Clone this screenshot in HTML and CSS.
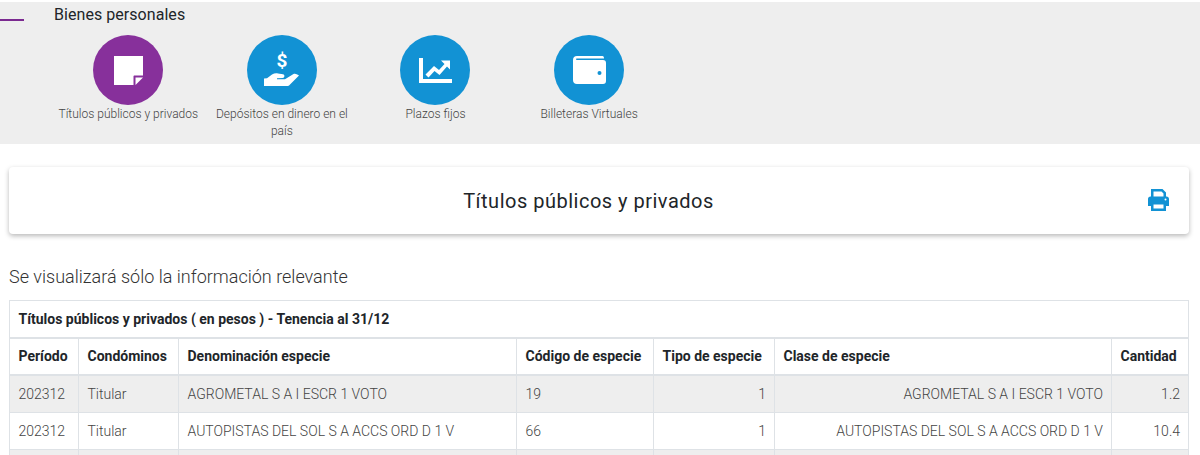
FILE: index.html
```html
<!DOCTYPE html>
<html lang="en">
<head>
  <meta charset="UTF-8" />
  <title>Bienes personales</title>
  <link rel="stylesheet" href="styles.css">
</head>
<body>
  <!-- Selector de bienes -->
  <div class="band">
    <div class="band-head">
      <span class="tick"></span>
      <span class="band-title">Bienes personales</span>
    </div>
    <div class="steps">
      <div class="step">
        <div class="circle purple">
          <svg width="29" height="29" viewBox="0 0 29 29"><path d="M0 0H29V19.500H20.500C19.900 19.500 19.500 19.900 19.500 20.500V29H0Z" fill="#fff"/><path d="M21.500 21.500H29L21.500 29Z" fill="#fff"/></svg>
        </div>
        <span class="step-label">Títulos públicos y privados</span>
      </div>
      <div class="step">
        <div class="circle stack">
          <span class="dollar">$</span>
          <svg width="35" height="13" viewBox="0 0 35 13"><path d="M0 5.500L3 5.200L8 1.500C10 0.300 12 0.200 14 0.500L19 1.200C21 1.600 21 4.800 18.500 5L13 5.300V6.300H21L29.500 1C31.500 0 34 2 35 2.500L26 11.500C25.300 12.500 24 13 23 13H0Z" fill="#fff"/></svg>
        </div>
        <span class="step-label">Depósitos en dinero en el país</span>
      </div>
      <div class="step">
        <div class="circle">
          <svg width="33" height="25" viewBox="0 0 33 25"><path d="M0 0H4V21H33V25H0Z" fill="#fff"/><path d="M6.500 16.500L15 8L20 12L25.500 6L22 2.500H31V11.500L28 8.500L20.500 17L15.500 13L9.500 19.500Z" fill="#fff"/></svg>
        </div>
        <span class="step-label">Plazos fijos</span>
      </div>
      <div class="step">
        <div class="circle">
          <svg width="33" height="28" viewBox="0 0 33 28"><path d="M4 0H29.500C30.500 0 31 1 31 2.500H3.500C3 2.500 3 4 3.500 4H30C32 4 33 5 33 7V25C33 27 32 28 30 28H4C1.500 28 0 26.500 0 24V4C0 1.500 1.500 0 4 0Z" fill="#fff"/><circle cx="26.500" cy="17" r="2" fill="#1292d4"/></svg>
        </div>
        <span class="step-label">Billeteras Virtuales</span>
      </div>
    </div>
  </div>

  <div class="content">
    <div class="card">
      <h2>Títulos públicos y privados</h2>
      <svg class="print" width="21" height="22" viewBox="0 0 21 22"><path d="M3 0H14.500L18 3.500V9H15.500V4.500L13.500 2.500H5.500V9H3Z" fill="#1292d4"/><path d="M2.500 7.500H18.500C20 7.500 21 8.500 21 10V17H18V14H3V17H0V10C0 8.500 1 7.500 2.500 7.500Z" fill="#1292d4"/><path d="M3 13H18V22H3ZM5.500 15.500V19.500H15.500V15.500Z" fill="#1292d4" fill-rule="evenodd"/><circle cx="17.500" cy="10.500" r="1" fill="#fff"/></svg>
    </div>

    <p class="note">Se visualizará sólo la información relevante</p>

    <table>
      <colgroup>
        <col class="c-periodo"><col class="c-cond"><col class="c-denom"><col class="c-cod"><col class="c-tipo"><col class="c-clase"><col>
      </colgroup>
      <thead>
        <tr><th colspan="7">Títulos públicos y privados ( en pesos ) - Tenencia al 31/12</th></tr>
        <tr>
          <th>Período</th>
          <th>Condóminos</th>
          <th>Denominación especie</th>
          <th>Código de especie</th>
          <th>Tipo de especie</th>
          <th>Clase de especie</th>
          <th>Cantidad</th>
        </tr>
      </thead>
      <tbody>
        <tr>
          <td>202312</td>
          <td>Titular</td>
          <td>AGROMETAL S A I ESCR 1 VOTO</td>
          <td>19</td>
          <td class="num">1</td>
          <td class="num">AGROMETAL S A I ESCR 1 VOTO</td>
          <td class="num">1.2</td>
        </tr>
        <tr>
          <td>202312</td>
          <td>Titular</td>
          <td>AUTOPISTAS DEL SOL S A ACCS ORD D 1 V</td>
          <td>66</td>
          <td class="num">1</td>
          <td class="num">AUTOPISTAS DEL SOL S A ACCS ORD D 1 V</td>
          <td class="num">10.4</td>
        </tr>
        <tr>
          <td>&nbsp;</td><td></td><td></td><td></td><td></td><td></td><td></td>
        </tr>
      </tbody>
    </table>
  </div>
</body>
</html>
```

FILE: styles.css
```css
* {
  box-sizing: border-box;
}

html, body {
  margin: 0;
  padding: 0;
  height: 100%;
  overflow: hidden;
  background-color: #fff;
  font-family: Roboto, Arial, sans-serif;
  color: #212529;
}

.band {
  height: 142px;
  margin-top: 2px;
  background-color: #eee;
}

.band-head {
  display: flex;
  align-items: center;
  gap: 30px;
  height: 24px;
}

.tick {
  width: 24px;
  height: 2px;
  margin-top: 11px;
  background-color: #7b2a90;
}

.band-title {
  font-size: 16px;
  letter-spacing: 0.05px;
  color: #212529;
}

.steps {
  display: flex;
  padding: 9px 0 0 51.5px;
}

.step {
  display: flex;
  flex-direction: column;
  align-items: center;
  width: 153.6px;
  text-align: center;
}

.circle {
  display: flex;
  justify-content: center;
  align-items: center;
  width: 70px;
  height: 70px;
  border-radius: 50%;
  background-color: #1292d4;
}

.circle.purple {
  background-color: #87309b;
}

.circle.stack {
  flex-direction: column;
  gap: 3px;
  padding-bottom: 2px;
}

.dollar {
  font-size: 19px;
  font-weight: 700;
  line-height: 18px;
  color: #fff;
}

.step-label {
  margin-top: 1px;
  font-size: 12px;
  font-weight: 300;
  line-height: 17px;
  color: #444;
}

.content {
  padding: 23px 11px 0 9px;
}

.card {
  display: flex;
  justify-content: center;
  align-items: center;
  position: relative;
  height: 67px;
  padding-right: 21px;
  background-color: #fff;
  border-radius: 4px;
  box-shadow: 0 2px 5px rgba(0, 0, 0, 0.28);
}

.card h2 {
  margin: 0;
  font-size: 20px;
  font-weight: 400;
  letter-spacing: 0.5px;
  color: #212529;
}

.print {
  position: absolute;
  right: 20px;
  top: 22px;
}

.note {
  margin: 32px 0 13px;
  font-size: 18px;
  font-weight: 300;
  line-height: 21px;
  color: #333;
}

table {
  width: 100%;
  table-layout: fixed;
  border-collapse: collapse;
  font-size: 14px;
}

.c-periodo { width: 69px; }
.c-cond { width: 100px; }
.c-denom { width: 338px; }
.c-cod { width: 137px; }
.c-tipo { width: 121px; }
.c-clase { width: 337px; }

th, td {
  height: 37px;
  padding: 0 8px 0 8.5px;
  border: 1px solid #dee2e6;
  text-align: left;
  white-space: nowrap;
}

th {
  font-weight: 700;
  color: #212529;
  border-bottom-width: 2px;
}

td {
  height: 37.5px;
  padding-top: 1px;
  font-weight: 300;
  color: #444;
}

tbody tr:nth-child(odd) {
  background-color: #eee;
}

.num {
  text-align: right;
}
```
